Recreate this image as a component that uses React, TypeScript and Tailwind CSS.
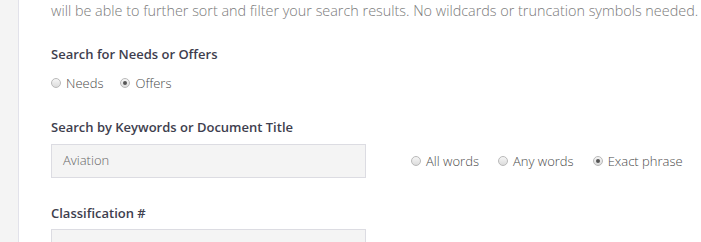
import React from 'react';

function Radio({ label, checked }: { label: string; checked?: boolean }) {
  return (
    <label className="flex items-center gap-[5px] text-[13px] font-light leading-[20px] text-[#4a4a4a]">
      <span className="flex h-[10px] w-[10px] items-center justify-center rounded-full border border-[#b9b9b9] bg-gradient-to-b from-[#f6f6f6] to-[#dcdcdc]">
        {checked && <span className="h-[4px] w-[4px] rounded-full bg-[#555]" />}
      </span>
      <span>{label}</span>
    </label>
  );
}

export default function App() {
  return (
    <div
      className="flex h-[242px] w-[701px] overflow-hidden bg-white"
      style={{ fontFamily: '"Open Sans", "Liberation Sans", sans-serif' }}
    >
      <div className="w-[19px] shrink-0 border-r border-[#e2e2ea] bg-[#f4f4f4]" />
      <div className="flex-1 pl-[32px]">
        <p className="whitespace-nowrap text-[14.4px] font-light leading-[22px] text-[#7a7a7a]">
          will be able to further sort and filter your search results. No wildcards or truncation symbols needed.
        </p>

        <h3 className="mt-[22px] text-[13px] font-semibold leading-[20px] text-[#3e3e4e]">Search for Needs or Offers</h3>
        <div className="mt-[9px] flex gap-[17px]">
          <Radio label="Needs" />
          <Radio label="Offers" checked />
        </div>

        <h3 className="mt-[24px] text-[13px] font-semibold leading-[20px] text-[#3e3e4e]">
          Search by Keywords or Document Title
        </h3>
        <div className="mt-[7px] flex items-center">
          <div className="flex h-[34px] w-[315px] items-center border border-[#dcdce2] bg-[#f4f4f4] px-[11px] text-[13px] font-light text-[#666]">
            Aviation
          </div>
          <div className="ml-[45px] flex gap-[19px]">
            <Radio label="All words" />
            <Radio label="Any words" />
            <Radio label="Exact phrase" checked />
          </div>
        </div>

        <h3 className="mt-[25px] text-[13px] font-semibold leading-[20px] text-[#3e3e4e]">Classification #</h3>
        <div className="mt-[6px] h-[34px] w-[315px] border border-[#dcdce2] bg-[#f4f4f4]" />
      </div>
    </div>
  );
}
